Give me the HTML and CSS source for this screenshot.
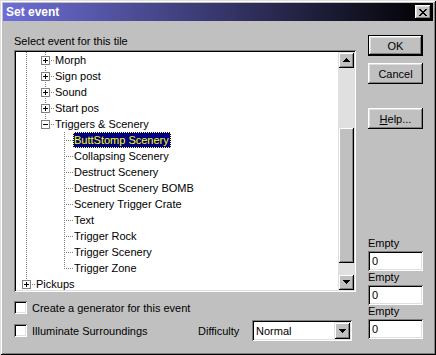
FILE: index.html
```html
<!DOCTYPE html>
<html lang="en">
<head>
  <meta charset="UTF-8" />
  <meta name="viewport" content="width=device-width, initial-scale=1" />
  <title>Set event</title>
  <link rel="stylesheet" href="styles.css">
</head>
<body>
  <div class="window">
    <div class="titlebar">
      <span class="title">Set event</span>
      <button class="close" aria-label="Close">
        <svg width="8" height="7" viewBox="0 0 8 7"><path d="M0 0h2v1H0zM6 0h2v1H6zM1 1h2v1H1zM5 1h2v1H5zM2 2h4v1H2zM3 3h2v1H3zM2 4h4v1H2zM1 5h2v1H1zM5 5h2v1H5zM0 6h2v1H0zM6 6h2v1H6z" fill="#000"/></svg>
      </button>
    </div>

    <div class="content">
      <div class="main">
        <div class="caption">Select event for this tile</div>

        <div class="tree">
          <div class="rows">
            <div class="row"><span class="cell pass"></span><span class="cell node"><span class="box plus"></span></span><span class="label">Morph</span></div>
            <div class="row"><span class="cell pass"></span><span class="cell node"><span class="box plus"></span></span><span class="label">Sign post</span></div>
            <div class="row"><span class="cell pass"></span><span class="cell node"><span class="box plus"></span></span><span class="label">Sound</span></div>
            <div class="row"><span class="cell pass"></span><span class="cell node"><span class="box plus"></span></span><span class="label">Start pos</span></div>
            <div class="row"><span class="cell pass"></span><span class="cell node last"><span class="box"></span></span><span class="label">Triggers &amp; Scenery</span></div>
            <div class="row"><span class="cell pass"></span><span class="cell"></span><span class="cell tee"></span><span class="label selected">ButtStomp Scenery</span></div>
            <div class="row"><span class="cell pass"></span><span class="cell"></span><span class="cell tee"></span><span class="label">Collapsing Scenery</span></div>
            <div class="row"><span class="cell pass"></span><span class="cell"></span><span class="cell tee"></span><span class="label">Destruct Scenery</span></div>
            <div class="row"><span class="cell pass"></span><span class="cell"></span><span class="cell tee"></span><span class="label">Destruct Scenery BOMB</span></div>
            <div class="row"><span class="cell pass"></span><span class="cell"></span><span class="cell tee"></span><span class="label">Scenery Trigger Crate</span></div>
            <div class="row"><span class="cell pass"></span><span class="cell"></span><span class="cell tee"></span><span class="label">Text</span></div>
            <div class="row"><span class="cell pass"></span><span class="cell"></span><span class="cell tee"></span><span class="label">Trigger Rock</span></div>
            <div class="row"><span class="cell pass"></span><span class="cell"></span><span class="cell tee"></span><span class="label">Trigger Scenery</span></div>
            <div class="row"><span class="cell pass"></span><span class="cell"></span><span class="cell end"></span><span class="label">Trigger Zone</span></div>
            <div class="row"><span class="cell node"><span class="box plus"></span></span><span class="label">Pickups</span></div>
          </div>

          <div class="scrollbar">
            <div class="raised sb-btn">
              <svg width="7" height="4" viewBox="0 0 7 4"><path d="M3 0h1v1H3zM2 1h3v1H2zM1 2h5v1H1zM0 3h7v1H0z" fill="#000"/></svg>
            </div>
            <div class="sb-track"><div class="raised sb-thumb"></div></div>
            <div class="raised sb-btn">
              <svg width="7" height="4" viewBox="0 0 7 4"><path d="M0 0h7v1H0zM1 1h5v1H1zM2 2h3v1H2zM3 3h1v1H3z" fill="#000"/></svg>
            </div>
          </div>
        </div>

        <div class="options">
          <div class="check"><span class="checkbox"></span>Create a generator for this event</div>
          <div class="option-row">
            <div class="check"><span class="checkbox"></span>Illuminate Surroundings</div>
            <span class="field-label">Difficulty</span>
            <div class="combo">
              <span class="combo-text">Normal</span>
              <span class="raised combo-btn">
                <svg width="7" height="4" viewBox="0 0 7 4"><path d="M0 0h7v1H0zM1 1h5v1H1zM2 2h3v1H2zM3 3h1v1H3z" fill="#000"/></svg>
              </span>
            </div>
          </div>
        </div>
      </div>

      <div class="side">
        <button class="btn default"><span class="raised">OK</span></button>
        <button class="btn cancel"><span class="raised">Cancel</span></button>
        <button class="btn help"><span class="raised"><u>H</u>elp...</span></button>

        <div class="fields">
          <div class="empty-label">Empty</div>
          <div class="input">0</div>
          <div class="empty-label">Empty</div>
          <div class="input">0</div>
          <div class="empty-label">Empty</div>
          <div class="input">0</div>
        </div>
      </div>
    </div>
  </div>
</body>
</html>
```

FILE: styles.css
```css
body {
  margin: 0;
  font-family: "Liberation Sans", Arial, sans-serif;
  font-size: 11px;
  color: #000;
  background: #c0c0c0;
}
.window {
  width: 436px;
  height: 355px;
  box-sizing: border-box;
  padding: 3px;
  background: #c0c0c0;
  box-shadow: inset 1px 1px #dfdfdf, inset -1px -1px #000, inset 2px 2px #fff, inset -2px -2px #808080;
  display: flex;
  flex-direction: column;
}
.raised {
  background: #c0c0c0;
  box-shadow: inset 1px 1px #dfdfdf, inset -1px -1px #000, inset 2px 2px #fff, inset -2px -2px #808080;
}

/* title bar */
.titlebar {
  height: 18px;
  display: flex;
  align-items: center;
  padding: 0 2px 0 3px;
  background: linear-gradient(to right, #6e6ed8, #000);
}
.title {
  flex: 1;
  color: #fff;
  font-weight: bold;
  font-size: 12px;
  line-height: 18px;
}
.close {
  width: 16px;
  height: 14px;
  padding: 0;
  border: none;
  display: flex;
  align-items: center;
  justify-content: center;
  background: #c0c0c0;
  box-shadow: inset -1px -1px #000, inset 1px 1px #fff, inset -2px -2px #808080, inset 2px 2px #dfdfdf;
}

/* body */
.content {
  flex: 1;
  display: flex;
  gap: 12px;
  padding: 14px 10px 11px 11px;
}
.main {
  width: 342px;
  display: flex;
  flex-direction: column;
}
.caption {
  line-height: 13px;
  margin-bottom: 2px;
}

/* tree */
.tree {
  --vdots: repeating-linear-gradient(to bottom, #808080 0 1px, transparent 1px 2px);
  --hdots: repeating-linear-gradient(to right, #808080 0 1px, transparent 1px 2px);
  height: 242px;
  box-sizing: border-box;
  padding: 2px;
  background: #fff;
  box-shadow: inset 1px 1px #808080, inset -1px -1px #fff, inset 2px 2px #000, inset -2px -2px #dfdfdf;
  display: flex;
}
.rows {
  flex: 1;
  overflow: hidden;
}
.row {
  display: flex;
  height: 16px;
}
.cell {
  width: 19px;
  height: 16px;
  flex: none;
  background-repeat: no-repeat;
}
.pass {
  background-image: var(--vdots);
  background-size: 1px 16px;
  background-position: 10px 0;
}
.tee, .node {
  background-image: var(--vdots), var(--hdots);
  background-size: 1px 16px, 7px 1px;
  background-position: 10px 0, 12px 8px;
}
.end, .node.last {
  background-image: var(--vdots), var(--hdots);
  background-size: 1px 9px, 7px 1px;
  background-position: 10px 0, 12px 8px;
}
.box {
  display: block;
  width: 7px;
  height: 7px;
  margin: 4px 0 0 6px;
  border: 1px solid #808080;
  background: #fff linear-gradient(#000, #000) 1px 3px / 5px 1px no-repeat;
}
.box.plus {
  background:
    linear-gradient(#000, #000) 3px 1px / 1px 5px no-repeat,
    linear-gradient(#000, #000) 1px 3px / 5px 1px no-repeat,
    #fff;
}
.label {
  line-height: 16px;
  padding: 0 2px 0 1px;
  white-space: nowrap;
}
.label.selected {
  background: #000080;
  color: #ff0;
  outline: 1px dotted #ffff80;
  outline-offset: -1px;
}

/* scrollbar */
.scrollbar {
  width: 16px;
  display: flex;
  flex-direction: column;
}
.sb-btn {
  height: 16px;
  display: flex;
  align-items: center;
  justify-content: center;
}
.sb-track {
  flex: 1;
  background: #e0e0e0;
  padding-top: 59px;
}
.sb-thumb {
  height: 136px;
}

/* options */
.options {
  margin-top: 9px;
}
.check {
  display: flex;
  align-items: center;
  gap: 5px;
  height: 13px;
}
.checkbox {
  width: 13px;
  height: 13px;
  flex: none;
  background: #fff;
  box-shadow: inset 1px 1px #808080, inset -1px -1px #fff, inset 2px 2px #000, inset -2px -2px #dfdfdf;
}
.option-row {
  margin-top: 6px;
  height: 21px;
  display: grid;
  grid-template-columns: 184px 54px 100px;
  align-items: center;
}
.combo {
  height: 21px;
  box-sizing: border-box;
  padding: 2px;
  display: flex;
  align-items: center;
  background: #fff;
  box-shadow: inset 1px 1px #808080, inset -1px -1px #fff, inset 2px 2px #000, inset -2px -2px #dfdfdf;
}
.combo-text {
  flex: 1;
  padding-left: 2px;
}
.combo-btn {
  width: 16px;
  height: 17px;
  display: flex;
  align-items: center;
  justify-content: center;
}

/* right column */
.side {
  width: 55px;
  display: flex;
  flex-direction: column;
  padding-bottom: 2px;
}
.btn {
  height: 21px;
  padding: 0;
  border: none;
  background: none;
  font: inherit;
  color: #000;
  display: flex;
}
.btn .raised {
  flex: 1;
  display: flex;
  align-items: center;
  justify-content: center;
  box-shadow: inset -1px -1px #000, inset 1px 1px #fff, inset -2px -2px #808080, inset 2px 2px #dfdfdf;
}
.btn.default {
  border: 1px solid #000;
  margin-bottom: 7px;
}
.btn.cancel {
  margin-bottom: 24px;
}
.fields {
  margin-top: auto;
}
.empty-label {
  line-height: 13px;
  margin-bottom: 1px;
}
.input {
  height: 20px;
  box-sizing: border-box;
  padding: 0 4px;
  line-height: 20px;
  background: #fff;
  box-shadow: inset 1px 1px #808080, inset -1px -1px #fff, inset 2px 2px #000, inset -2px -2px #dfdfdf;
}
```
